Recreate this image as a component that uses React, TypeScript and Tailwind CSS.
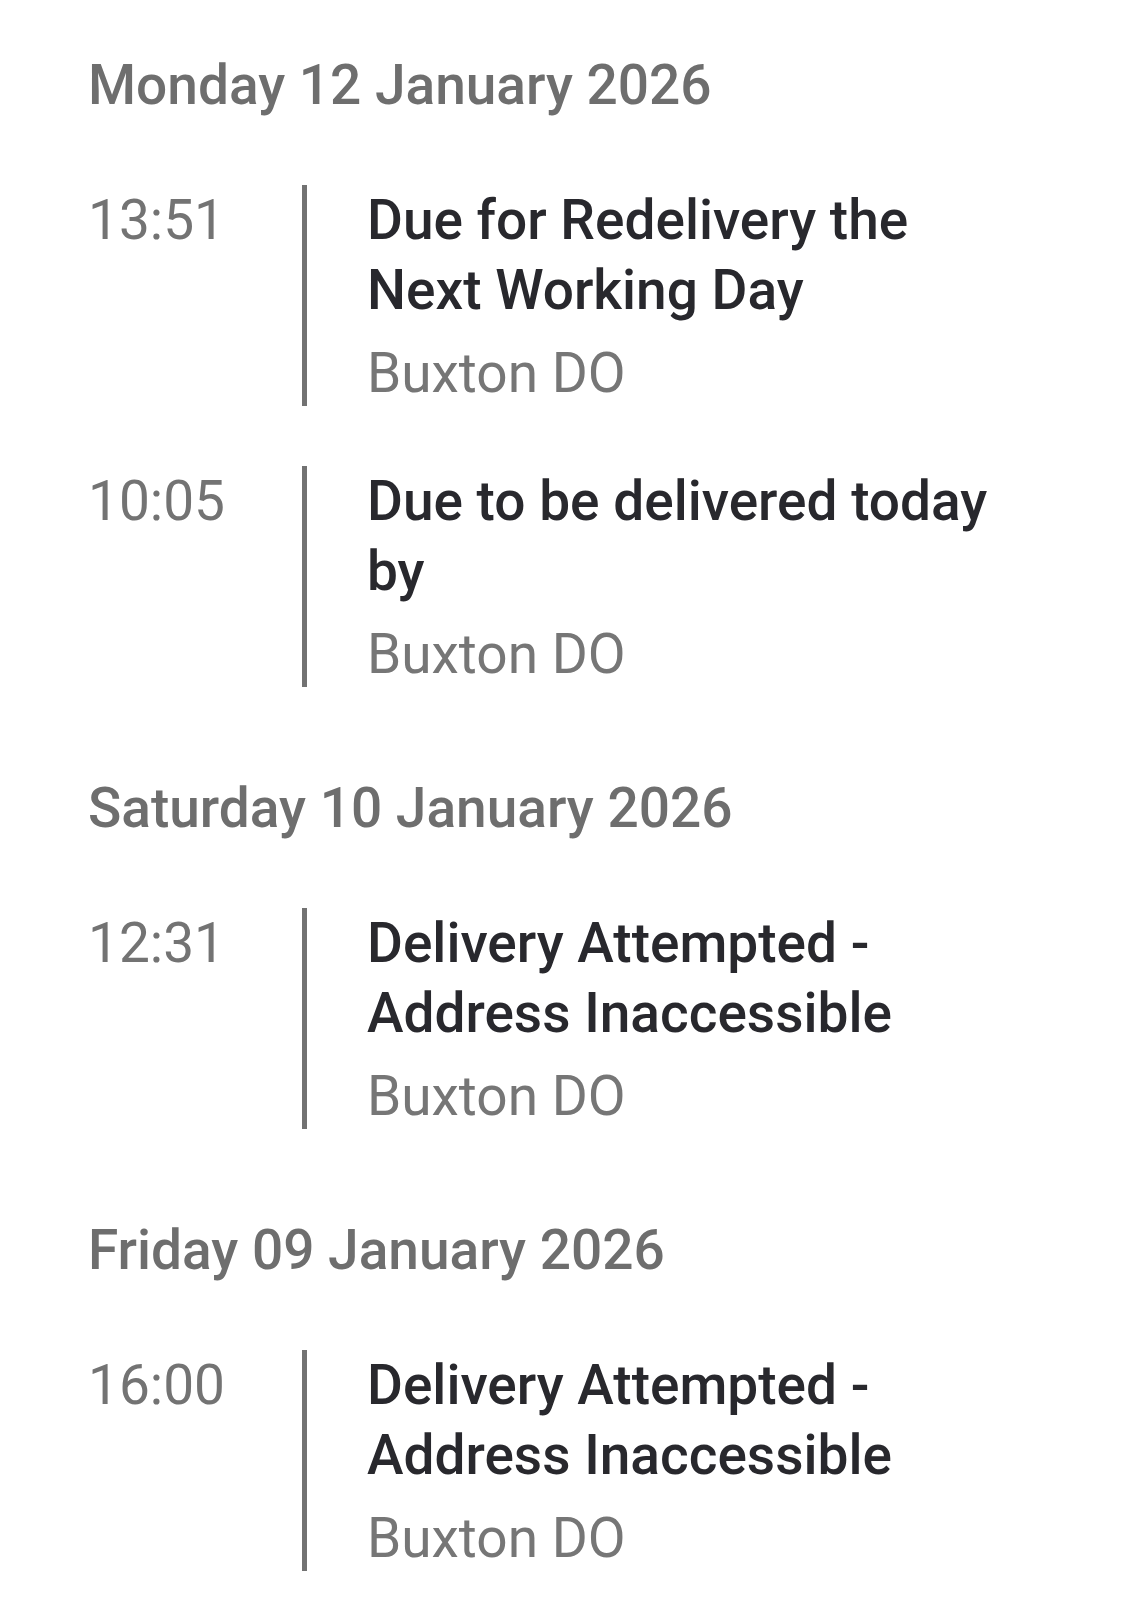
import React from "react";

type Event = { time: string; title: string; place: string };
type Day = { date: string; events: Event[] };

const days: Day[] = [
  {
    date: "Monday 12 January 2026",
    events: [
      { time: "13:51", title: "Due for Redelivery the Next Working Day", place: "Buxton DO" },
      { time: "10:05", title: "Due to be delivered today by", place: "Buxton DO" },
    ],
  },
  {
    date: "Saturday 10 January 2026",
    events: [
      { time: "12:31", title: "Delivery Attempted - Address Inaccessible", place: "Buxton DO" },
    ],
  },
  {
    date: "Friday 09 January 2026",
    events: [
      { time: "16:00", title: "Delivery Attempted - Address Inaccessible", place: "Buxton DO" },
    ],
  },
];

export default function App() {
  return (
    <div
      className="min-h-[1608px] w-full bg-white pl-[88px] pr-[100px] pt-[50px] text-[55px] leading-[70px]"
      style={{ fontFamily: "Roboto, 'Noto Sans', sans-serif" }}
    >
      <div className="flex flex-col gap-[86px]">
        {days.map((d) => (
          <section key={d.date} className="flex flex-col gap-[60px]">
            <h2 className="mb-[5px] font-medium text-[#6e6e6e]">{d.date}</h2>
            {d.events.map((e, i) => (
              <div key={i} className="flex">
                <div className="w-[214px] shrink-0 text-[#737373]">{e.time}</div>
                <div className="flex-1 border-l-[5px] border-[#727272] pl-[60px]">
                  <div className="font-medium text-[#28282d]">{e.title}</div>
                  <div className="mt-[15px] leading-[66px] text-[#767676]">{e.place}</div>
                </div>
              </div>
            ))}
          </section>
        ))}
      </div>
    </div>
  );
}
